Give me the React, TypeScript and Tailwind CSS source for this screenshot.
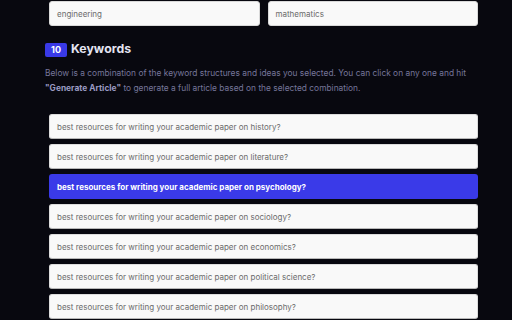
import React from "react";

const topics = [
  "history",
  "literature",
  "psychology",
  "sociology",
  "economics",
  "political science",
  "philosophy",
];

export default function App() {
  return (
    <div
      className="w-[512px] h-[320px] overflow-hidden bg-[#08080f] pt-[1px] pl-[45px] pr-[30px]"
      style={{ fontFamily: "Inter, 'Noto Sans', sans-serif" }}
    >
      <div className="flex gap-2 pl-[4px] pr-[4px]">
        <div className="flex-1 h-[25px] bg-[#f9f9f9] border border-[#d9d9d9] rounded-[3px] flex items-center px-[7px] text-[8px] text-[#6b6b6b]">
          engineering
        </div>
        <div className="flex-1 h-[25px] bg-[#f9f9f9] border border-[#d9d9d9] rounded-[3px] flex items-center px-[7px] text-[8px] text-[#6b6b6b]">
          mathematics
        </div>
      </div>
      <div className="mt-[16px] flex items-center gap-[4px] h-[15px]">
        <div className="w-[22px] h-[14px] rounded-[2px] bg-[#3939e6] text-white text-[9px] font-bold flex items-center justify-center">
          10
        </div>
        <div className="text-[12.3px] font-bold text-[#e4e4f2] leading-none">Keywords</div>
      </div>
      <p className="mt-[9px] text-[8.4px] leading-[15px] text-[#76769a]">
        Below is a combination of the keyword structures and ideas you selected. You can click on any one and hit{" "}
        <span className="font-bold text-[#9a9ac2]">"Generate Article"</span> to generate a full article based on the
        selected combination.
      </p>
      <div className="mt-[18px] flex flex-col gap-[5px] pl-[4px] pr-[4px]">
        {topics.map((t) =>
          t === "psychology" ? (
            <div
              key={t}
              className="h-[25px] shrink-0 bg-[#3a3ae8] rounded-[3px] flex items-center px-[8px] text-[8px] font-bold text-white"
            >
              best resources for writing your academic paper on {t}?
            </div>
          ) : (
            <div
              key={t}
              className="h-[25px] shrink-0 bg-[#f9f9f9] border border-[#dcdcdc] border-b-[#b8b8b8] rounded-[3px] flex items-center px-[7px] text-[8px] text-[#6b6b6b]"
            >
              best resources for writing your academic paper on {t}?
            </div>
          )
        )}
      </div>
    </div>
  );
}
